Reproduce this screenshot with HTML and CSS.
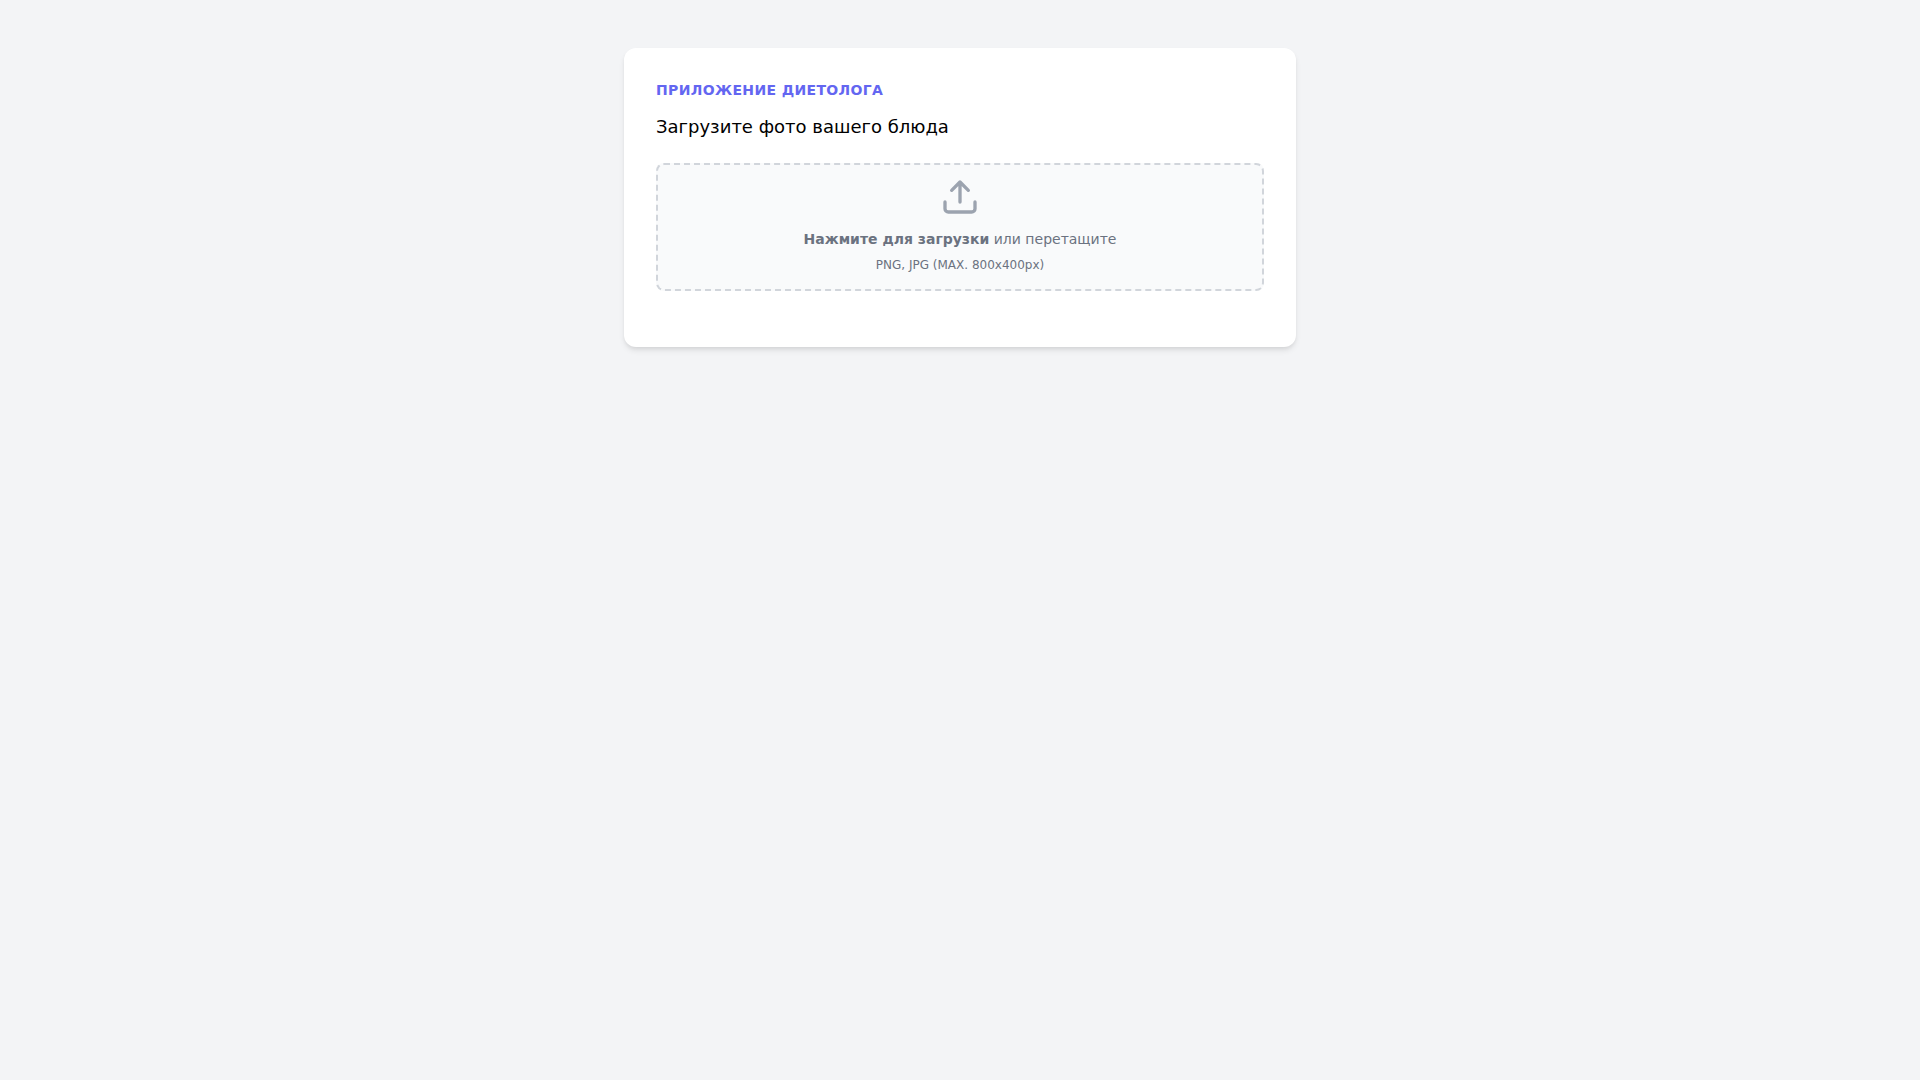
FILE: index.html
```html
<!DOCTYPE html>
<html lang="ru">
<head>
<meta charset="utf-8">
<meta name="viewport" content="width=device-width, initial-scale=1">
<title>Приложение диетолога</title>
<link rel="stylesheet" href="styles.css">
</head>
<body>
<main class="card">
  <h1 class="eyebrow">Приложение диетолога</h1>
  <p class="lead">Загрузите фото вашего блюда</p>
  <label class="dropzone" for="photo">
    <svg class="upload-icon" viewBox="0 0 24 24" fill="none" stroke="currentColor" stroke-width="2" stroke-linecap="round" stroke-linejoin="round" aria-hidden="true">
      <path d="M21 15v4a2 2 0 0 1-2 2H5a2 2 0 0 1-2-2v-4"/>
      <path d="M17 8l-5-5-5 5M12 3v12"/>
    </svg>
    <span class="prompt"><strong>Нажмите для загрузки</strong> или перетащите</span>
    <span class="hint">PNG, JPG (MAX. 800x400px)</span>
    <input class="file-input" id="photo" type="file" accept="image/png, image/jpeg">
  </label>
</main>
</body>
</html>
```

FILE: styles.css
```css
*, *::before, *::after {
  box-sizing: border-box;
}

body {
  margin: 0;
  padding: 48px 16px;
  min-height: 100vh;
  background: #f3f4f6;
  color: #000;
  font-family: "DejaVu Sans", sans-serif;
  font-size: 16px;
  line-height: 24px;
}

.card {
  max-width: 672px;
  margin: 0 auto;
  padding: 32px 32px 56px;
  background: #fff;
  border-radius: 12px;
  box-shadow: 0 4px 6px -1px rgba(0, 0, 0, 0.1), 0 2px 4px -1px rgba(0, 0, 0, 0.06);
}

.eyebrow {
  margin: 0;
  color: #6366f1;
  font-size: 14px;
  line-height: 20px;
  font-weight: 700;
  letter-spacing: 0.025em;
  text-transform: uppercase;
}

.lead {
  margin: 14px 0 0;
  font-size: 18px;
  line-height: 25px;
}

.dropzone {
  display: flex;
  flex-direction: column;
  align-items: center;
  margin-top: 24px;
  min-height: 128px;
  padding: 12px 16px;
  border: 2px dashed #d1d5db;
  border-radius: 8px;
  background: #f9fafb;
  color: #6b7280;
  text-align: center;
  cursor: pointer;
}

.upload-icon {
  width: 40px;
  height: 40px;
  margin-bottom: 12px;
  color: #9ca3af;
}

.prompt {
  margin-bottom: 8px;
  font-size: 14px;
  line-height: 20px;
}

.hint {
  font-size: 12px;
  line-height: 16px;
}

.file-input {
  display: none;
}
```
